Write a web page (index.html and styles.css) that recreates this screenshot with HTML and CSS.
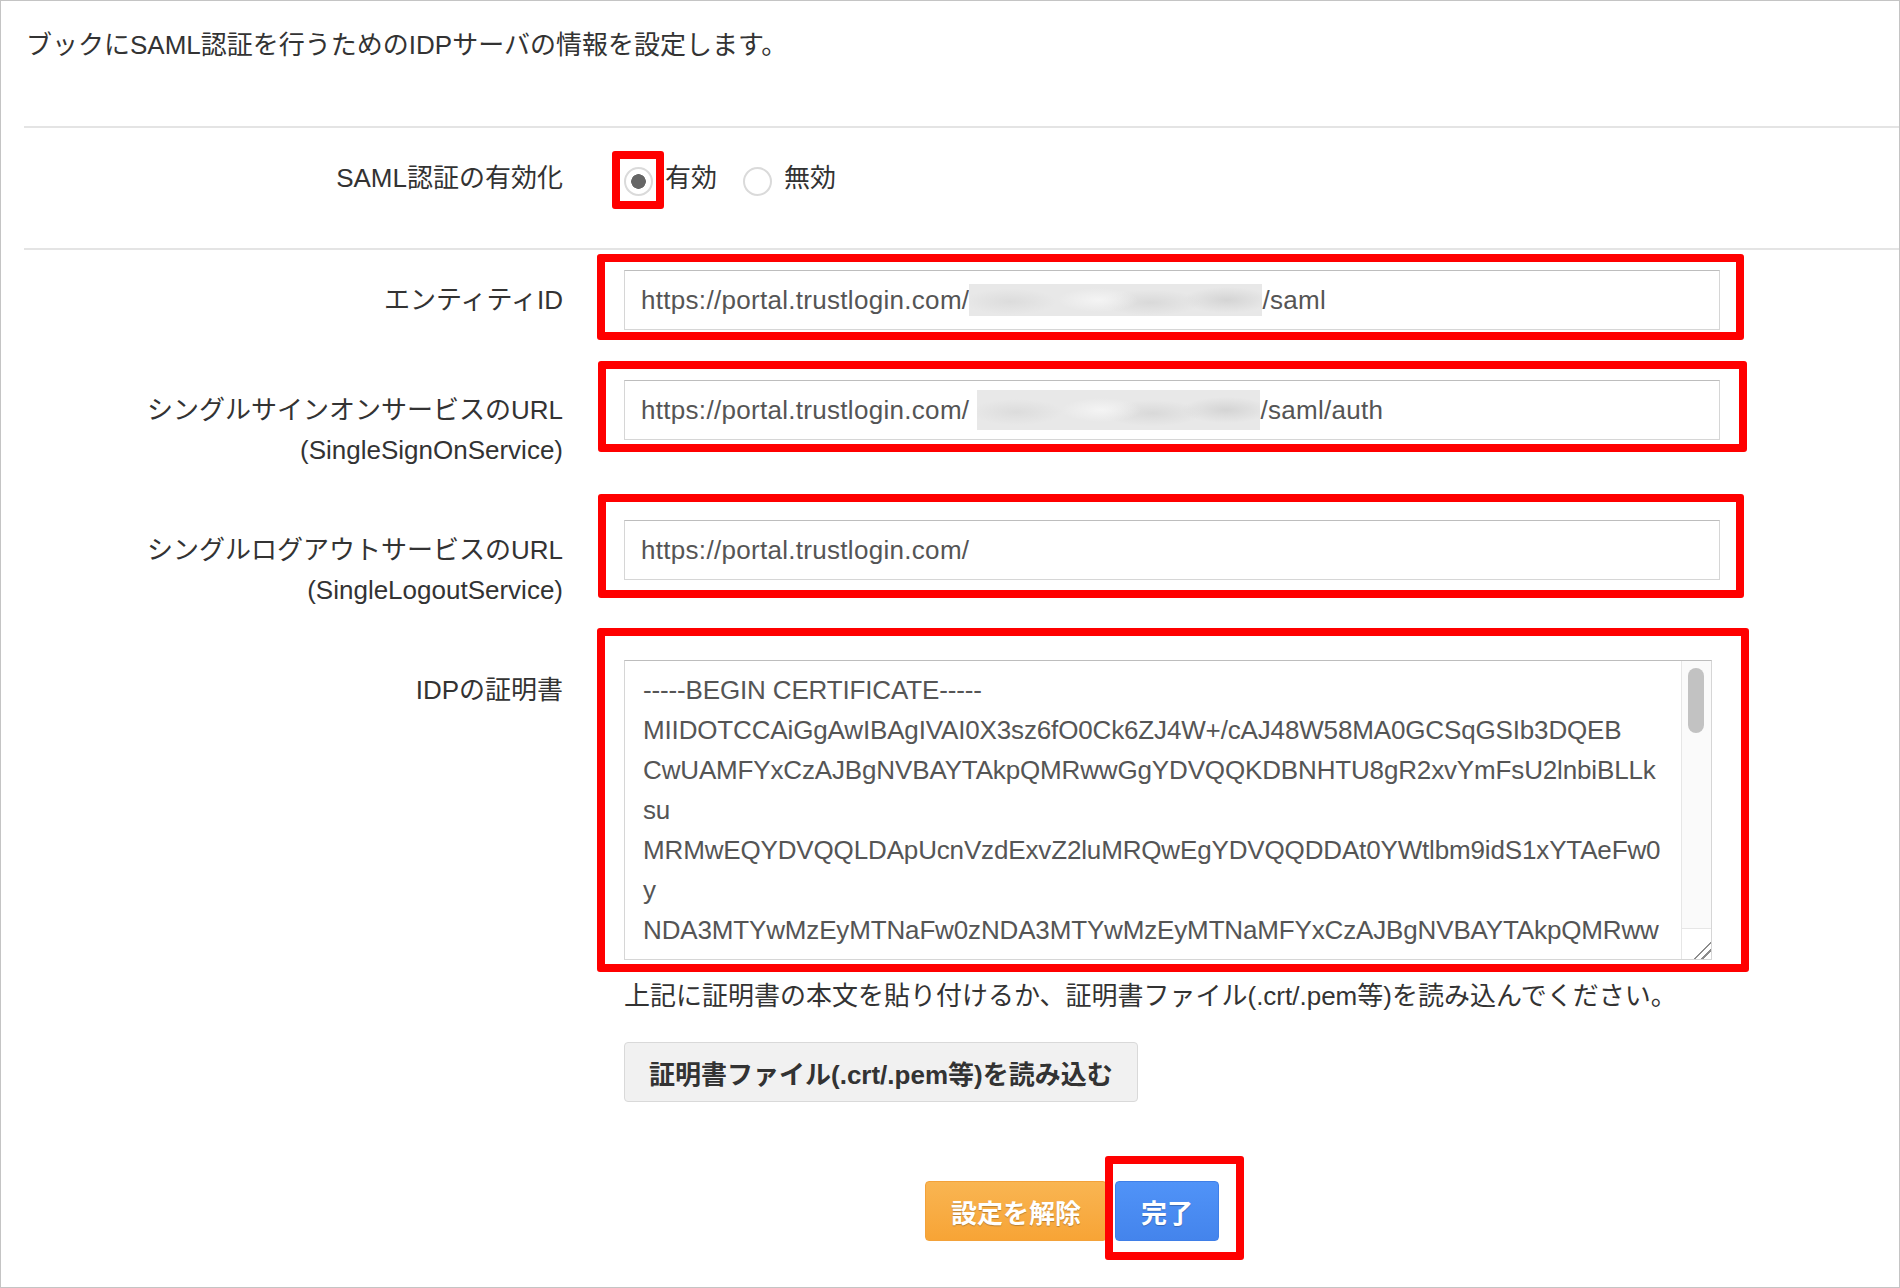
FILE: index.html
```html
<!DOCTYPE html>
<html lang="ja">
<head>
  <meta charset="UTF-8">
  <meta name="viewport" content="width=device-width, initial-scale=1.0">
  <title>SAML認証の設定</title>
  <link rel="stylesheet" href="styles.css">
</head>
<body>
  <div class="panel">
    <p class="intro">ブックにSAML認証を行うためのIDPサーバの情報を設定します。</p>

    <form class="saml-form" onsubmit="return false;">
      <!-- 有効 / 無効 -->
      <div class="row row-switch">
        <div class="row-label">SAML認証の有効化</div>
        <div class="radio-group">
          <label class="radio-opt">
            <span class="radio-box mark mark-radio"><input type="radio" name="saml-enabled" class="radio" checked></span>
            <span>有効</span>
          </label>
          <label class="radio-opt">
            <span class="radio-box"><input type="radio" name="saml-enabled" class="radio"></span>
            <span>無効</span>
          </label>
        </div>
      </div>

      <div class="row row-field">
        <div class="row-label">エンティティID</div>
        <div class="row-control">
          <div class="mark mark-entity">
            <div class="field"><span>https://portal.trustlogin.com/</span><span class="redact redact-entity"></span><span>/saml</span></div>
          </div>
        </div>
      </div>

      <div class="row row-field">
        <div class="row-label">シングルサインオンサービスのURL<br>(SingleSignOnService)</div>
        <div class="row-control">
          <div class="mark mark-sso">
            <div class="field"><span>https://portal.trustlogin.com/</span><span class="redact redact-sso"></span><span>/saml/auth</span></div>
          </div>
        </div>
      </div>

      <div class="row row-field">
        <div class="row-label">シングルログアウトサービスのURL<br>(SingleLogoutService)</div>
        <div class="row-control">
          <div class="mark mark-slo">
            <div class="field"><span>https://portal.trustlogin.com/</span></div>
          </div>
        </div>
      </div>

      <div class="row row-field row-cert">
        <label class="row-label" for="idp-cert">IDPの証明書</label>
        <div class="row-control">
          <div class="mark mark-cert">
            <div class="cert-box">
<textarea id="idp-cert" class="cert" spellcheck="false">-----BEGIN CERTIFICATE-----
MIIDOTCCAiGgAwIBAgIVAI0X3sz6fO0Ck6ZJ4W+/cAJ48W58MA0GCSqGSIb3DQEB
CwUAMFYxCzAJBgNVBAYTAkpQMRwwGgYDVQQKDBNHTU8gR2xvYmFsU2lnbiBLLk
su
MRMwEQYDVQQLDApUcnVzdExvZ2luMRQwEgYDVQQDDAt0YWtlbm9idS1xYTAeFw0
y
NDA3MTYwMzEyMTNaFw0zNDA3MTYwMzEyMTNaMFYxCzAJBgNVBAYTAkpQMRww
GgYDVQQKDBNHTU8gR2xvYmFsU2lnbiBLLksuMRMwEQYDVQQLDApUcnVzdExv
Z2luMRQwEgYDVQQDDAt0YWtlbm9idS1xYTCCASIwDQYJKoZIhvcNAQEBBQAD
ggEPADCCAQoCggEBAL7m2nQ5vR0pXcY8kq3Fh1sZt9wD4eG6uJ0aB2cN5yPq
LrM8xTs1QwVd7hE3kJ9fA2mN6bR4tY0uI8oP5aS3dF7gH1jK9lZ2xC4vB6nM
0qW8eR2tY4uI6oP1aS5dF3gH7jK9lZ0xC2vB4nM6qW8eR0tY2uI4oP6aS1dF
9gH3jK5lZ7xC1vB9nM3qW5eR7tY1uI9oP3aS7dF5gH9jK1lZ3xC7vB1nM9qW
2eR4tY6uI0oP8aS2dF0gH4jK6lZ8xC0vB2nM4qW6eR8tY3uI5oP7aS9dF1gH
5jK7lZ4xC9vB7nM1qW3eR5tY7uI1oP9aS4dF8gH2jK0lZ6xC3vB5nM7qW1eR
MA0GCSqGSIb3DQEBCwUAA4IBAQBk3Jv8Qz2Rt5Wx7Yp1Lm4Nc6Hs9Gd0Fa3E
Ub8Ki2Oj5Pl7Qm1Rn4So6Tp8Uq0Vr3Ws5Xt7Yu9Zv1aw3bx5cy7dz9e0f2g4h6
i8j0k2l4m6n8o0p2q4r6s8t0u2v4w6x8y0z2A4B6C8D0E2F4G6H8I0J2K4L6
M8N0O2P4Q6R8S0T2U4V6W8X0Y2Z4a6b8c0d2e4f6g8h0i2j4k6l8m0n2o4p6
q8r0s2t4u6v8w0x2y4z6A8B0C2D4E6F8G0H2I4J6K8L0M2N4O6P8Q0R2S4T6
U8V0W2X4Y6Z8a0b2c4d6e8f0g2h4i6j8k0l2m4n6o8p0q2r4s6t8u0v2w4x6
y8z0A2B4C6D8E0F2G4H6I8J0K2L4M6N8O0P2Q4R6S8T0U2V4W6X8Y0Z2a4b6
c8d0e2f4g6h8i0j2k4l6m8n0o2p4q6r8s0t2u4v6w8x0y2z4A6B8C0D2E4==
-----END CERTIFICATE-----</textarea>
              <div class="cert-rail">
                <span class="rail-thumb"></span>
                <span class="rail-grip"></span>
              </div>
            </div>
          </div>
          <p class="hint">上記に証明書の本文を貼り付けるか、証明書ファイル(.crt/.pem等)を読み込んでください。</p>
          <button type="button" class="btn-file">証明書ファイル(.crt/.pem等)を読み込む</button>
        </div>
      </div>

      <div class="actions">
        <button type="button" class="btn btn-reset">設定を解除</button>
        <span class="mark mark-done"><button type="submit" class="btn btn-done">完了</button></span>
      </div>
    </form>
  </div>
</body>
</html>
```

FILE: styles.css
```css
* {
  box-sizing: border-box;
}

body {
  margin: 0;
  background: #fff;
  color: #333;
  font-family: "Liberation Sans", "Noto Sans CJK JP", sans-serif;
  font-size: 26px;
}

.panel {
  width: 1900px;
  height: 1288px;
  border: 1px solid #c4c4c4;
}

.intro {
  margin: 0;
  padding: 24px 25px 0;
  line-height: 40px;
}

.saml-form {
  margin: 61px 0 0 23px;
}

/* label column / control column */
.row {
  display: grid;
  grid-template-columns: 539px 1096px;
  column-gap: 61px;
}

.row-label {
  display: block;
  text-align: right;
  line-height: 40px;
  padding-top: 10px;
}

.row-switch {
  border-top: 2px solid #e4e4e4;
  border-bottom: 2px solid #e4e4e4;
  padding: 30px 0 50px;
  margin-bottom: 20px;
}

.row-switch .row-label {
  padding-top: 0;
}

.row-field {
  margin-bottom: 50px;
}

.row-cert {
  margin-bottom: 79px;
}

/* radio buttons */
.radio-group {
  display: flex;
  align-items: center;
  gap: 26px;
  height: 40px;
}

.radio-opt {
  display: flex;
  align-items: center;
  gap: 12px;
  line-height: 40px;
  cursor: pointer;
}

.radio-box {
  display: block;
  margin-top: 6px;
}

.radio {
  appearance: none;
  -webkit-appearance: none;
  display: block;
  width: 29px;
  height: 29px;
  margin: 0;
  border: 2px solid #dadada;
  border-radius: 50%;
  background: #fff;
  outline: none;
}

.radio:checked {
  background: radial-gradient(circle, #666 0 7px, #fff 7.6px);
}

/* text inputs */
.field {
  display: flex;
  align-items: center;
  height: 60px;
  padding: 0 16px;
  border: 1px solid #d6d6d6;
  border-top-color: #bdbdbd;
  color: #555;
  line-height: 40px;
  letter-spacing: 0.3px;
  white-space: nowrap;
  overflow: hidden;
}

.redact {
  display: inline-block;
  flex: none;
  background:
    radial-gradient(ellipse 46px 13px at 14% 55%, #dcdcdc, rgba(220, 220, 220, 0)),
    radial-gradient(ellipse 40px 12px at 44% 50%, #f4f4f4, rgba(244, 244, 244, 0)),
    radial-gradient(ellipse 50px 13px at 62% 58%, #d9d9d9, rgba(217, 217, 217, 0)),
    radial-gradient(ellipse 44px 13px at 88% 50%, #d4d4d4, rgba(212, 212, 212, 0)),
    #e8e8e8;
}

.redact-entity {
  width: 293px;
  height: 32px;
}

.redact-sso {
  width: 283px;
  height: 40px;
  margin-left: 8px;
}

/* certificate box: textarea + its scroll rail */
.cert-box {
  display: flex;
  width: 1088px;
  height: 300px;
  border: 1px solid #d6d6d6;
  border-top-color: #bdbdbd;
  background: #fff;
}

.cert {
  flex: 1;
  min-width: 0;
  height: 100%;
  margin: 0;
  padding: 9px 4px 0 18px;
  border: 0;
  border-radius: 0;
  font: inherit;
  line-height: 40px;
  letter-spacing: -0.15px;
  color: #555;
  white-space: pre;
  overflow: hidden;
  resize: none;
  outline: none;
}

.cert-rail {
  display: flex;
  flex-direction: column;
  flex: none;
  width: 30px;
  padding: 7px 7px 0 6px;
  background: #fafafa;
  border-left: 1px solid #e6e6e6;
}

.rail-thumb {
  display: block;
  height: 65px;
  background: #c2c2c2;
  border-radius: 8px;
}

.rail-grip {
  display: block;
  height: 31px;
  margin: auto -7px 0 -6px;
  border-top: 1px solid #e6e6e6;
  background:
    linear-gradient(135deg, transparent 0 70%, #8c8c8c 70% 74%, transparent 74% 83%, #8c8c8c 83% 87%, transparent 87%),
    #fff;
}

.hint {
  margin: 16px 0 0;
  line-height: 40px;
}

.btn-file {
  display: block;
  height: 60px;
  margin-top: 26px;
  padding: 0 24px;
  background: #f1f1f1;
  border: 1px solid #d9d9d9;
  border-radius: 4px;
  color: #333;
  font: inherit;
  font-weight: bold;
  cursor: pointer;
}

/* bottom buttons */
.actions {
  display: flex;
  gap: 8px;
  padding-left: 901px;
}

.btn {
  display: block;
  height: 60px;
  padding: 0 25px;
  border: 1px solid;
  border-radius: 4px;
  color: #fff;
  font: inherit;
  font-weight: bold;
  text-shadow: 0 1px 1px rgba(0, 0, 0, 0.25);
  cursor: pointer;
}

.btn-reset {
  background: linear-gradient(#f9b552, #f7a436);
  border-color: #f3a23a;
}

.btn-done {
  background: linear-gradient(#5093f8, #4484ec);
  border-color: #3f7fe8;
}

/* red callout frames */
.mark {
  position: relative;
}

.mark::after {
  content: "";
  position: absolute;
  border: 8px solid #f00;
  border-radius: 3px;
  pointer-events: none;
}

.mark-radio::after {
  inset: -16px -11px -13px -12px;
}

.mark-entity::after {
  inset: -16px -24px -10px -27px;
}

.mark-sso::after {
  inset: -19px -27px -12px -26px;
}

.mark-slo::after {
  inset: -26px -24px -18px -26px;
}

.mark-cert {
  width: 1088px;
}

.mark-cert::after {
  inset: -32px -37px -12px -27px;
}

.mark-done {
  display: block;
}

.mark-done::after {
  inset: -25px -25px -19px -10px;
}
```
